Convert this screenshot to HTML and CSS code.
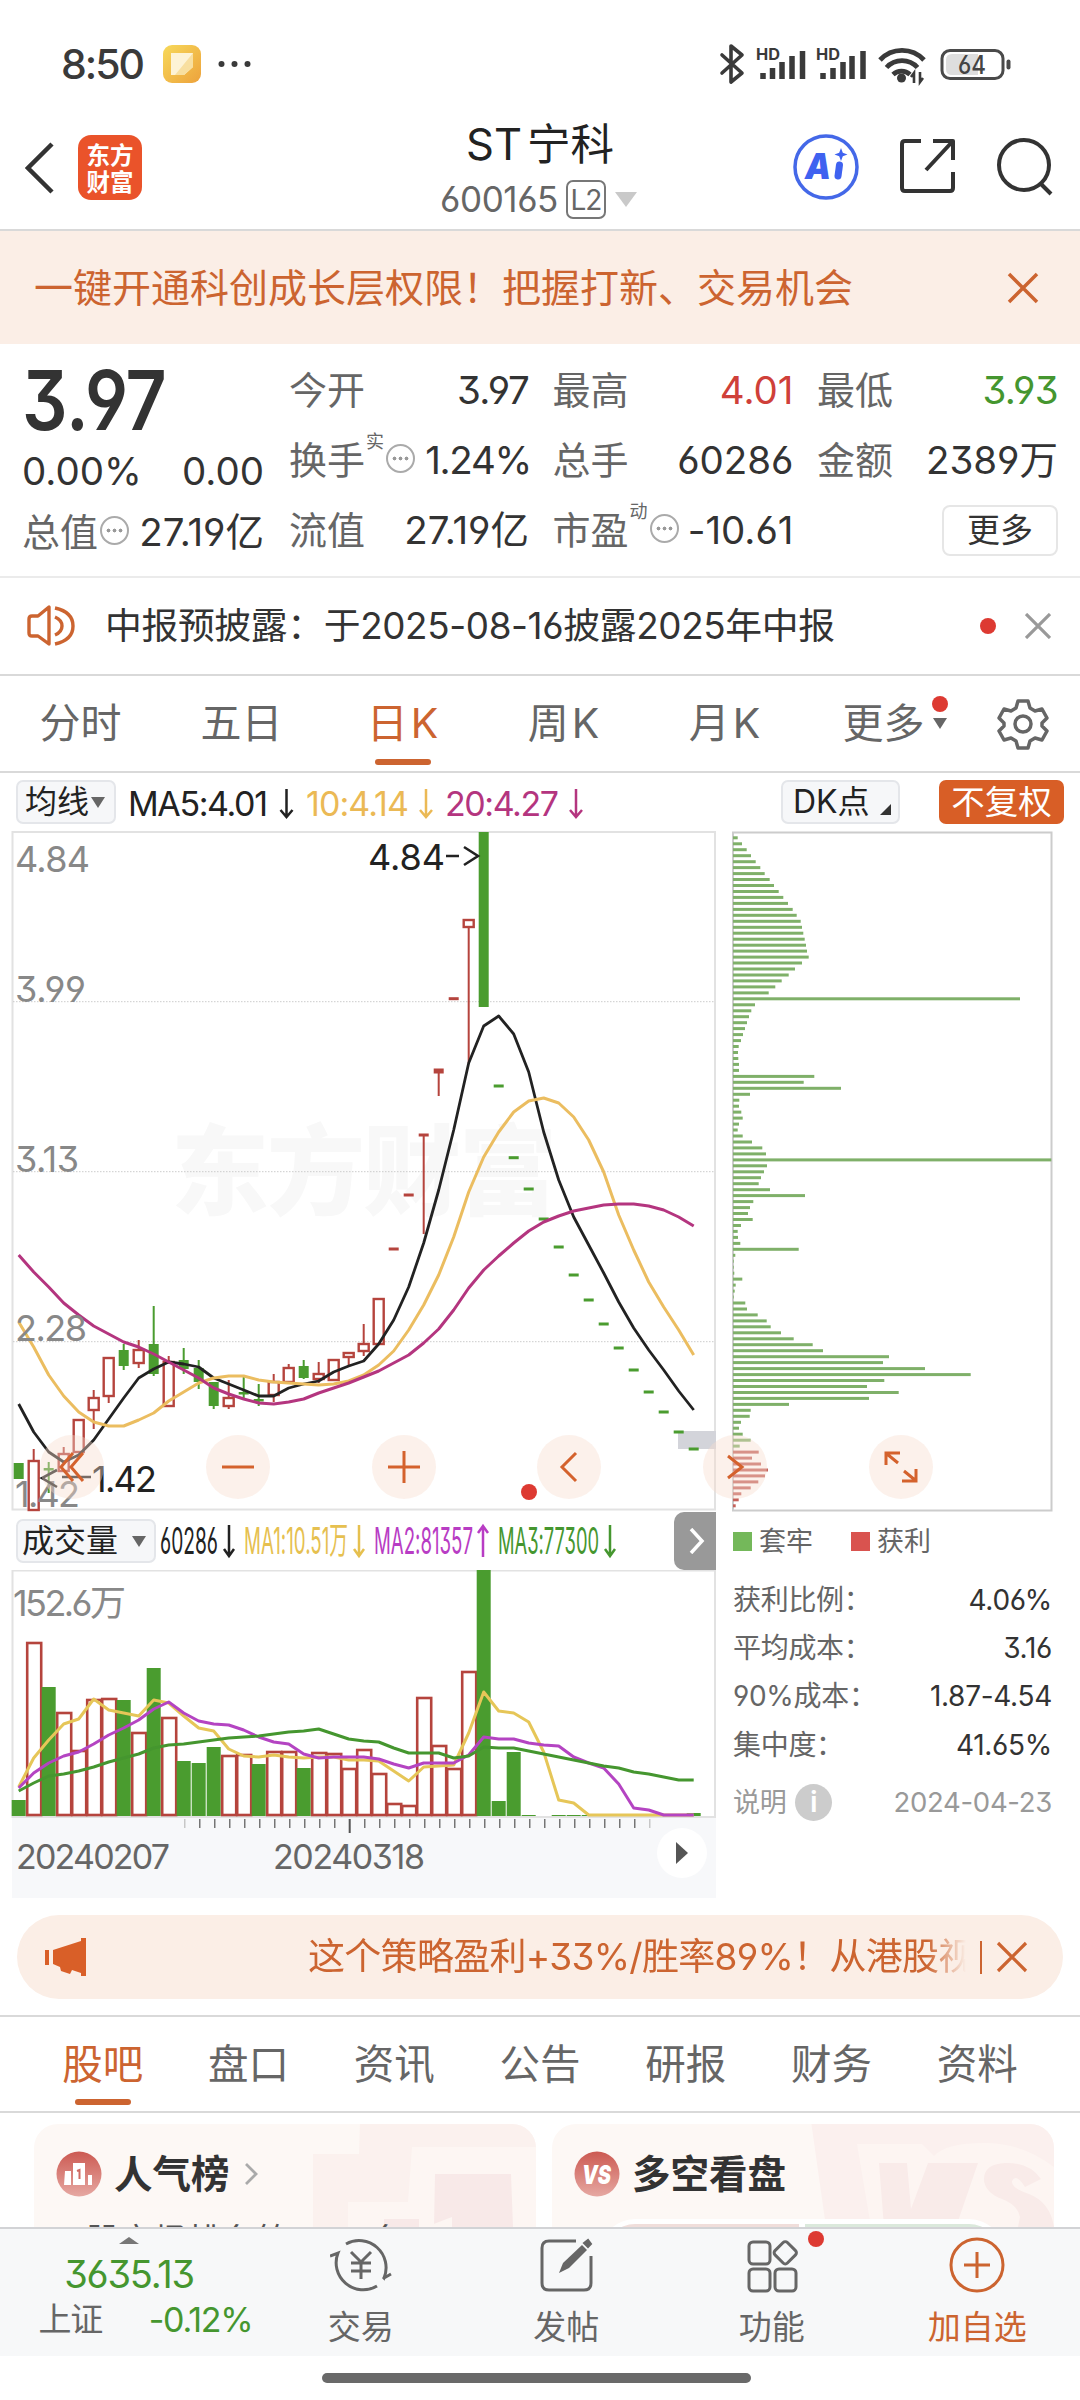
FILE: index.html
```
<!DOCTYPE html>
<html lang="zh-CN">
<head>
  <meta charset="UTF-8">
  <meta name="viewport" content="width=device-width, initial-scale=1.0">
  <title>ST宁科 600165</title>
  <link rel="stylesheet" href="styles.css">
</head>
<body>
  <!-- Status Bar -->
  <div class="status-bar">
    <span class="clock">8:50</span>
    <svg class="app-icon" width="38" height="38" viewBox="0 0 38 38">
      <defs>
        <linearGradient id="noteBg" x1="0" y1="0" x2="1" y2="1"><stop offset="0" stop-color="#f7d95a"/><stop offset="1" stop-color="#eda23c"/></linearGradient>
      </defs>
      <rect width="38" height="38" rx="9" fill="url(#noteBg)"/>
      <path d="M8 8h22v14l-9 8H8z" fill="#fdf3d6"/>
      <path d="M30 8v14l-9 8h-9z" fill="#f8dfa0"/>
    </svg>
    <svg class="dots" width="34" height="8" viewBox="0 0 34 8" fill="#3a3a3a"><circle cx="3.500" cy="4" r="3"/><circle cx="16.500" cy="4" r="3"/><circle cx="29.500" cy="4" r="3"/></svg>
    <svg class="status-icons" width="296" height="44" viewBox="716 41 296 44">
      <path d="M722 54l20 18-11 9V45l11 9-20 18" fill="none" stroke="#3a3a3a" stroke-width="3.600" stroke-linejoin="round" stroke-linecap="round"/>
      <text class="hd" x="756" y="59" textLength="24" lengthAdjust="spacingAndGlyphs">HD</text>
      <path d="M763 78v-6M772.500 78v-11M782 78v-17M792 78v-23M802.500 78v-28" stroke="#3a3a3a" stroke-width="5.500"/>
      <text class="hd" x="816" y="59" textLength="24" lengthAdjust="spacingAndGlyphs">HD</text>
      <path d="M823 78v-6M833 78v-11M843 78v-17M852 78v-23M863 78v-28" stroke="#3a3a3a" stroke-width="5.500"/>
      <g fill="none" stroke="#3a3a3a" stroke-width="4.800">
        <path d="M880 59a30 30 0 0 1 44 0"/>
        <path d="M886.500 66.500a21 21 0 0 1 31 0"/>
        <path d="M893 73.500a12.500 12.500 0 0 1 17 0"/>
      </g>
      <circle cx="901.500" cy="77" r="4.500" fill="#3a3a3a"/>
      <path d="M914 82V72l-3 4M920 71v10l3-4" fill="none" stroke="#3a3a3a" stroke-width="2.600"/>
      <rect x="942" y="49.500" width="61" height="28" rx="8" fill="#fff" stroke="#4a4a4a" stroke-width="3"/>
      <path d="M952 53h26v21h-26q-6 0-6-6v-9q0-6 6-6z" fill="#dedede"/>
      <rect x="1006.500" y="58.500" width="4" height="10" rx="2" fill="#4a4a4a"/>
      <text class="battery-text" x="958" y="73" textLength="28" lengthAdjust="spacingAndGlyphs">64</text>
    </svg>
  </div>

  <!-- Header -->
  <header class="header">
    <div class="header-left">
      <svg width="32" height="52" viewBox="0 0 32 52" fill="none" stroke="#333" stroke-width="4.500"><path d="M27 2L3 26l24 24"/></svg>
      <div class="logo"><span>东方</span><span>财富</span></div>
    </div>
    <div class="header-title">
      <div class="stock-name">ST<span>宁科</span></div>
      <div class="stock-code">600165<span class="level">L2</span><i class="caret"></i></div>
    </div>
    <div class="header-right">
      <svg width="66" height="66" viewBox="0 0 66 66">
        <circle cx="33" cy="33" r="31" fill="#fff" stroke="#4468e8" stroke-width="3.500"/>
        <text class="ai" x="12" y="45" textLength="26" lengthAdjust="spacingAndGlyphs">A</text>
        <path d="M46.500 31l-1.500 11" stroke="#3f62f0" stroke-width="7" stroke-linecap="round"/>
        <path d="M48 14l1.800 4.700 4.700 1.800-4.700 1.800L48 27l-1.800-4.700-4.700-1.800 4.700-1.800z" fill="#3f62f0"/>
      </svg>
      <svg width="56" height="56" viewBox="0 0 56 56" fill="none" stroke="#333" stroke-width="4" stroke-linejoin="round">
        <path d="M22 3H6q-3 0-3 3v44q0 3 3 3h45q3 0 3-3V34M34 3h20v19M53 4L27 32"/>
      </svg>
      <svg width="58" height="58" viewBox="0 0 58 58" fill="none" stroke="#333" stroke-width="4"><circle cx="28" cy="27" r="25"/><path d="M44 45l11 11"/></svg>
    </div>
  </header>

  <!-- Permission banner -->
  <div class="banner">
    <span>一键开通科创成长层权限！把握打新、交易机会</span>
    <svg width="32" height="32" viewBox="0 0 32 32" stroke="#cc6430" stroke-width="3.500"><path d="M2 2l28 28M30 2L2 30"/></svg>
  </div>

  <!-- Quote -->
  <section class="quote">
    <div class="quote-main">
      <div class="price"><span>3.97</span></div>
      <div class="quote-cell change"><b>0.00%</b><b>0.00</b></div>
      <div class="quote-cell"><label>总值</label><i class="more-dot"></i><b>27.19亿</b></div>
    </div>
    <div class="quote-grid">
      <div class="quote-cell"><label>今开</label><b class="short">3.97</b></div>
      <div class="quote-cell"><label>最高</label><b class="red">4.01</b></div>
      <div class="quote-cell"><label>最低</label><b class="short green">3.93</b></div>
      <div class="quote-cell"><label>换手</label><sup>实</sup><i class="more-dot"></i><b class="tight">1.24%</b></div>
      <div class="quote-cell"><label>总手</label><b>60286</b></div>
      <div class="quote-cell"><label>金额</label><b>2389万</b></div>
      <div class="quote-cell"><label>流值</label><b>27.19亿</b></div>
      <div class="quote-cell"><label>市盈</label><sup>动</sup><i class="more-dot"></i><b>-10.61</b></div>
      <div class="quote-cell"><button class="more-btn">更多</button></div>
    </div>
  </section>

  <!-- Notice -->
  <div class="notice">
    <svg width="50" height="42" viewBox="0 0 50 42" fill="none" stroke="#cc6430" stroke-width="3.400" stroke-linejoin="round">
      <path d="M22 2v37l-11-8H5q-3 0-3-3V14q0-3 3-3h6zM28 12q7 3 7 9t-7 9M28 3q18 4 18 18T28 39"/>
    </svg>
    <span class="notice-text">中报预披露：于2025-08-16披露2025年中报</span>
    <i class="red-dot"></i>
    <svg width="26" height="26" viewBox="0 0 26 26" stroke="#999" stroke-width="3.200"><path d="M1 1l24 24M25 1L1 25"/></svg>
  </div>

  <!-- Period tabs -->
  <nav class="period-tabs">
    <a>分时</a>
    <a>五日</a>
    <a class="active">日<span>K</span></a>
    <a>周<span>K</span></a>
    <a>月<span>K</span></a>
    <a class="has-more">更多<i class="red-dot"></i><i class="caret-dark"></i></a>
    <svg width="52" height="52" viewBox="0 0 52 52" fill="none" stroke="#666" stroke-width="3.500" stroke-linejoin="round">
      <path d="M21 3h10l2 7 5 3 7-2 5 9-5 5v3l5 5-5 9-7-2-5 3-2 7H21l-2-7-5-3-7 2-5-9 5-5v-3l-5-5 5-9 7 2 5-3z"/>
      <circle cx="26" cy="26" r="8"/>
    </svg>
  </nav>

  <!-- Moving averages -->
  <div class="ma-bar">
    <button class="chip ma-select">均线<i class="caret-dark"></i></button>
    <svg width="470" height="44" viewBox="132 779 470 44">
      <text x="130" y="815" textLength="140" fill="#222">MA5:4.01</text>
      <path d="M288.500 788v28m-6-7l6 7 6-7" stroke="#222"/>
      <text x="308" y="815" textLength="103" fill="#ebb955">10:4.14</text>
      <path d="M428 788v28m-6-7l6 7 6-7" stroke="#ebb955"/>
      <text x="447" y="815" textLength="114" fill="#b4357f">20:4.27</text>
      <path d="M578 788v28m-6-7l6 7 6-7" stroke="#b4357f"/>
    </svg>
    <button class="chip dk-select">DK点<i class="corner"></i></button>
    <button class="chip adjust">不复权</button>
  </div>

  <!-- Charts -->
  <section class="charts">
    <div class="chart-left">
      <svg id="klineChart" width="716" height="681" viewBox="0 831 716 681"></svg>
      <div class="vol-bar">
        <button class="chip vol-select">成交量<i class="caret-dark"></i></button>
        <svg width="470" height="58" viewBox="156 1512 470 58">
          <text x="160" y="1554" textLength="58" lengthAdjust="spacingAndGlyphs" fill="#222">60286</text>
          <path d="M229 1525v31m-5-7l5 7 5-7" stroke="#222"/>
          <text x="244" y="1554" textLength="104" lengthAdjust="spacingAndGlyphs" fill="#e6c04f">MA1:10.51万</text>
          <path d="M359 1525v31m-5-7l5 7 5-7" stroke="#e6c04f"/>
          <text x="374" y="1554" textLength="99" lengthAdjust="spacingAndGlyphs" fill="#b83cc4">MA2:81357</text>
          <path d="M483 1557v-31m-5 7l5-7 5 7" stroke="#b83cc4"/>
          <text x="498" y="1554" textLength="101" lengthAdjust="spacingAndGlyphs" fill="#45962f">MA3:77300</text>
          <path d="M610 1525v31m-5-7l5 7 5-7" stroke="#45962f"/>
        </svg>
        <button class="vol-next"><svg width="16" height="26" viewBox="0 0 16 26" fill="none" stroke="#fff" stroke-width="3.500"><path d="M2 1l11 12L2 25"/></svg></button>
      </div>
      <svg id="volumeChart" width="716" height="328" viewBox="0 1570 716 328"></svg>
    </div>
    <div class="chart-right">
      <svg id="chipChart" width="322" height="681" viewBox="731 831 322 681"></svg>
      <div class="legend"><i class="square green-bg"></i>套牢<i class="square red-bg"></i>获利</div>
      <div class="stats">
        <div class="stat"><span>获利比例：</span><b>4.06%</b></div>
        <div class="stat"><span>平均成本：</span><b>3.16</b></div>
        <div class="stat"><span>90%成本：</span><b>1.87-4.54</b></div>
        <div class="stat"><span>集中度：</span><b>41.65%</b></div>
        <div class="stat explain"><span>说明</span><i class="info">i</i><b>2024-04-23</b></div>
      </div>
    </div>

    <!-- Floating chart controls -->
    <div class="controls">
      <button><svg width="30" height="32" viewBox="0 0 30 32"><path d="M16 2L4 16l12 14M26 2L14 16l12 14"/></svg></button>
      <button><svg width="32" height="32" viewBox="0 0 32 32"><path d="M0 16h32"/></svg></button>
      <button><svg width="32" height="32" viewBox="0 0 32 32"><path d="M0 16h32M16 0v32"/></svg></button>
      <button><i class="red-dot"></i><svg width="20" height="32" viewBox="0 0 20 32"><path d="M17 2L3 16l14 14"/></svg></button>
      <button><svg width="20" height="32" viewBox="0 0 20 32"><path d="M3 5l14 11L3 27"/></svg></button>
      <button><svg width="34" height="32" viewBox="0 0 34 32"><path d="M2 14V2h14M3 3l11 9M32 18v12H18M31 29l-11-9"/></svg></button>
    </div>
  </section>

  <!-- Ad pill -->
  <div class="promo">
    <svg width="44" height="38" viewBox="0 0 44 38" fill="#d95f28"><path d="M0 12h4v15H0zM8 12l28-9v-3h5v38h-5v-3l-9-3-2 4-9-3-1-4-7-3z"/></svg>
    <span class="promo-text">这个策略盈利+33%/胜率89%！从港股视</span>
    <i class="divider"></i>
    <svg width="32" height="32" viewBox="0 0 32 32" stroke="#cc6430" stroke-width="3.200"><path d="M2 2l28 28M30 2L2 30"/></svg>
  </div>

  <!-- Content tabs -->
  <nav class="content-tabs">
    <a class="active">股吧</a>
    <a>盘口</a>
    <a>资讯</a>
    <a>公告</a>
    <a>研报</a>
    <a>财务</a>
    <a>资料</a>
  </nav>

  <!-- Cards, cut off by the bottom bar -->
  <section class="cards">
    <div class="card">
      <svg class="card-bg" width="502" height="106" viewBox="34 2121 502 106">
        <path d="M360 2121h176v106H313v-73h46z" fill="#fbf1ee"/>
        <path d="M412 2147h124l4 80H348v-25h60z" fill="#fdf6f3"/>
        <path d="M435 2174h76l2 53h-79zM384 2219h35v8h-35z" fill="#f8e9e8"/>
        <path d="M431 2225l21-8v10h-21z" fill="#fdf6f3"/>
      </svg>
      <div class="card-head">
        <svg width="46" height="46" viewBox="0 0 46 46">
          <defs><linearGradient id="redBadge" x1="0" y1="0" x2="0" y2="1"><stop offset="0" stop-color="#cc5a52"/><stop offset="1" stop-color="#e6a8a2"/></linearGradient></defs>
          <circle cx="23" cy="23" r="22.500" fill="url(#redBadge)"/>
          <path d="M9 20h6v14H8zM17 12h12v22H17zM32 24h4v10h-4z" fill="#fff"/>
          <path d="M21 20l2.500-1v9" stroke="#cf6a62" stroke-width="2" fill="none"/>
        </svg>
        <h3>人气榜</h3>
        <svg width="14" height="24" viewBox="0 0 14 24" fill="none" stroke="#aaa" stroke-width="2.800"><path d="M2 2l10 10L2 22"/></svg>
      </div>
      <p class="rank-text"><span>股市场排名第</span><span>名</span></p>
    </div>
    <div class="card">
      <svg class="card-bg" width="503" height="106" viewBox="551 2121 503 106">
        <path d="M810 2121h244v106H825z" fill="#fbf0ee"/>
        <path d="M856 2144h65l12 12q12-13 50-13 40 0 71 25v59H870z" fill="#fdf5f2"/>
        <path d="M878 2163h28l4 46 17-46h50l-22 64h-72zM1040 2179q-12-17-36-16-22 1-21 18 2 12 18 18t18 18l-2 10h36q-4-25-25-33-18-6-17-13 4-8 13 6z" fill="#f9ebe9"/>
      </svg>
      <div class="card-head">
        <svg width="46" height="46" viewBox="0 0 46 46"><circle cx="23" cy="23" r="22.500" fill="url(#redBadge)"/><text class="vs" x="8" y="33" textLength="29" lengthAdjust="spacingAndGlyphs">VS</text></svg>
        <h3>多空看盘</h3>
      </div>
      <div class="vote"><i class="vote-red"></i><i class="vote-green"></i></div>
    </div>
  </section>

  <!-- Bottom bar -->
  <footer class="bottom-bar">
    <div class="index-box">
      <i class="caret-up"></i>
      <div class="index-value">3635.13</div>
      <div class="index-row"><span>上证</span><b>-0.12%</b></div>
    </div>
    <a class="action">
      <svg width="62" height="58" viewBox="0 0 62 58" fill="none" stroke="#666" stroke-width="3">
        <path d="M16 8A27 27 0 0 1 54 42l-1-1M54 42l7-4M47 50A27 27 0 0 1 8 17l-8 3"/>
        <path d="M21 16l10 10 10-10M31 26v17M21 27h20M21 35h20"/>
      </svg>
      交易
    </a>
    <a class="action">
      <svg width="54" height="58" viewBox="0 0 54 58" fill="none" stroke="#666" stroke-width="3">
        <path d="M37 5H10Q3 5 3 12v35q0 7 7 7h35q7 0 7-7V20"/>
        <path d="M20 37l4-10L43 9l5 5-18 18z" fill="#666" stroke="none"/><path d="M45 7l4-3 3 4-3 3z" fill="#666" stroke-width="2"/>
      </svg>
      发帖
    </a>
    <a class="action">
      <svg width="54" height="58" viewBox="0 0 54 58" fill="none" stroke="#666" stroke-width="3">
        <rect x="4" y="6" width="21" height="22" rx="4"/><rect x="4" y="33" width="21" height="22" rx="4"/><rect x="30" y="33" width="21" height="22" rx="4"/>
        <rect x="31.500" y="8" width="17.500" height="17.500" rx="3" transform="rotate(45 40.200 16.800)"/>
      </svg>
      功能<i class="red-dot"></i>
    </a>
    <a class="action active">
      <svg width="58" height="58" viewBox="0 0 58 58" fill="none" stroke="#cc6430" stroke-width="3"><circle cx="29" cy="29" r="26"/><path d="M16 29h26M29 16v26"/></svg>
      加自选
    </a>
  </footer>
  <div class="home-area"><i></i></div>

  <script src="script.js"></script>
</body>
</html>
```
FILE: styles.css
```
* {
  margin: 0;
  padding: 0;
  box-sizing: border-box;
}

body {
  width: 1080px;
  height: 2400px;
  overflow: hidden;
  background-color: #fff;
  color: #333;
  font-family: Inter, "Noto Sans CJK SC", sans-serif;
  font-feature-settings: "cv03", "cv04", "cv09", "calt" 0;
  font-size: 38px;
  line-height: 1;
}

svg {
  display: block;
  flex-shrink: 0;
}

button {
  border: none;
  background: none;
  font: inherit;
  color: inherit;
  font-feature-settings: inherit;
}

i,
b {
  font-style: normal;
  font-weight: 400;
}

.red { color: #cf4039; }
.green { color: #45962f; }

.red-dot {
  width: 16px;
  height: 16px;
  border-radius: 50%;
  background-color: #dd3a32;
}

/* Status Bar */
.status-bar {
  height: 128px;
  display: flex;
  align-items: center;
  padding: 0 68px 0 61px;
}

.clock {
  width: 102px;
  font-size: 41px;
  font-weight: 500;
  letter-spacing: -2px;
  color: #3a3a3a;
}

.dots {
  margin-left: 17px;
}

.status-icons {
  margin-left: auto;
}

.hd {
  font-size: 16px;
  font-weight: 700;
  fill: #3a3a3a;
}

.battery-text {
  font-size: 25px;
  font-weight: 500;
  fill: #444;
}

/* Header */
.header {
  height: 103px;
  display: grid;
  grid-template-columns: 400px 1fr 400px;
  border-bottom: 2px solid #d9d9d9;
}

.header-left {
  display: flex;
  align-items: flex-start;
  gap: 21px;
  padding: 7px 0 0 25px;
}

.header-left svg {
  margin-top: 7px;
}

.logo {
  width: 64px;
  height: 65px;
  border-radius: 13px;
  background-color: #ea532a;
  color: #fff;
  font-family: "Noto Sans CJK SC", sans-serif;
  font-size: 23.500px;
  font-weight: 700;
  line-height: 27px;
  display: flex;
  flex-direction: column;
  align-items: center;
  justify-content: center;
}

.header-title {
  text-align: center;
  color: #222;
}

.stock-name {
  height: 48px;
  line-height: 33px;
  font-size: 43.500px;
}

.stock-name span {
  margin-left: 5px;
}

.stock-code {
  display: flex;
  align-items: center;
  height: 46px;
  margin-left: 40px;
  font-size: 35px;
  letter-spacing: -0.400px;
  color: #666;
}

.level {
  width: 40px;
  height: 39px;
  margin-left: 8px;
  border: 2px solid #777;
  border-radius: 7px;
  line-height: 36px;
  font-size: 28px;
  letter-spacing: -1px;
}

.caret {
  margin-left: 9px;
  border: 11px solid transparent;
  border-top: 15px solid #c9c9c9;
  border-bottom: none;
}

.header-right {
  display: flex;
  align-items: flex-start;
  padding: 6px 26px 0 0;
  justify-content: flex-end;
}

.ai {
  font-size: 36px;
  font-weight: 900;
  font-style: italic;
  fill: #3f62f0;
}

.header-right svg:nth-child(2) {
  margin: 4px 41px 0 40px;
}

.header-right svg:nth-child(3) {
  margin-top: 4px;
}

/* Permission banner */
.banner {
  height: 113px;
  padding: 0 41px 0 34px;
  display: flex;
  align-items: center;
  justify-content: space-between;
  background-color: #fbeee6;
  color: #cc6430;
  font-size: 39px;
}

/* Quote */
.quote {
  height: 234px;
  padding: 11px 22px 0 22px;
  display: flex;
  gap: 25px;
  border-bottom: 2px solid #ebebeb;
}

.quote-main {
  width: 242px;
}

.quote-grid {
  flex: 1;
  display: grid;
  grid-template-columns: 240px 241px 241px;
  grid-auto-rows: 70px;
  justify-content: space-between;
}

.price {
  height: 90px;
  font-size: 83px;
  font-weight: 600;
  line-height: 90px;
}

.price span {
  display: inline-block;
  transform: scaleX(0.86);
  transform-origin: left;
}

.quote-cell {
  height: 70px;
  display: flex;
  align-items: center;
}

.quote-cell.change {
  height: 52px;
}

.quote-cell label {
  color: #666;
}

.quote-cell b {
  margin-left: auto;
  font-size: 38.500px;
}

.quote-cell b.tight {
  margin-right: -2px;
  letter-spacing: -1.300px;
}

.quote-cell b.short {
  letter-spacing: -0.700px;
}

.quote-cell.change b:first-child {
  margin-left: 0;
}

.quote-cell sup {
  width: 20px;
  margin: -36px -2px 0 1px;
  font-size: 18px;
  color: #666;
}

/* round "..." hint after a label */
.more-dot {
  width: 29px;
  height: 29px;
  margin: -4px 0 0 2px;
  flex-shrink: 0;
  border: 2px solid #aaa;
  border-radius: 50%;
  background:
    radial-gradient(circle at 6.500px 12.500px, #999 1.700px, transparent 2.200px),
    radial-gradient(circle at 12.500px 12.500px, #999 1.700px, transparent 2.200px),
    radial-gradient(circle at 18.500px 12.500px, #999 1.700px, transparent 2.200px);
}

.more-btn {
  width: 116px;
  height: 51px;
  margin-left: auto;
  border: 2px solid #e6e6e6;
  border-radius: 8px;
  font-size: 33px;
}

/* Notice */
.notice {
  height: 98px;
  padding: 0 29px 0 27px;
  display: flex;
  align-items: center;
  border-bottom: 2px solid #d9d9d9;
}

.notice-text {
  margin-left: 28px;
  font-size: 36.800px;
  letter-spacing: -0.350px;
}

.notice .red-dot {
  margin: 0 29px 0 auto;
}

/* Period tabs */
.period-tabs {
  height: 97px;
  display: flex;
  align-items: center;
  border-bottom: 2px solid #d9d9d9;
  color: #666;
  font-size: 41px;
}

.period-tabs a {
  position: relative;
  width: 161px;
  height: 95px;
  line-height: 95px;
  text-align: center;
}

.period-tabs a span {
  margin-left: 3px;
}

.period-tabs a.has-more {
  padding-right: 4px;
}

.period-tabs a.active,
.content-tabs a.active {
  color: #cc6430;
}

.period-tabs a.active::after,
.content-tabs a.active::after {
  content: "";
  position: absolute;
  bottom: 6px;
  left: 50%;
  width: 56px;
  height: 6px;
  margin-left: -28px;
  border-radius: 3px;
  background-color: #cc6430;
}

.has-more .red-dot {
  position: absolute;
  top: 20px;
  right: 18px;
}

.has-more .caret-dark {
  position: absolute;
  top: 42px;
  right: 19px;
}

.period-tabs svg {
  margin-left: 31px;
}

.caret-dark {
  border: 7px solid transparent;
  border-top: 11px solid #666;
  border-bottom: none;
}

/* Moving averages */
.ma-bar {
  height: 58px;
  padding: 0 16px 0 16px;
  display: flex;
  align-items: center;
}

.ma-bar svg {
  overflow: visible;
}

.ma-bar text {
  font-size: 34px;
}

.ma-bar path,
.vol-bar path {
  fill: none;
  stroke-width: 2.500;
}

.chip {
  height: 44px;
  display: flex;
  align-items: center;
  border: 2px solid #e4e6ea;
  border-radius: 7px;
  background-color: #f6f7f9;
  color: #222;
  font-size: 32px;
  line-height: 40px;
}

.ma-select {
  width: 100px;
  padding-left: 7px;
  margin-right: 14px;
}

.ma-select .caret-dark {
  margin-left: 2px;
}

.dk-select {
  width: 119px;
  margin-left: auto;
  margin-right: 39px;
  padding-left: 10px;
}

.corner {
  margin: 14px 0 0 10px;
  border-left: 11px solid transparent;
  border-bottom: 11px solid #333;
}

.adjust {
  width: 125px;
  justify-content: center;
  border: none;
  background-color: #d85e26;
  color: #fff;
  font-size: 33.500px;
}

/* Charts */
.charts {
  position: relative;
  height: 1067px;
  display: flex;
  align-items: flex-start;
}

.chart-left {
  width: 716px;
}

.chart-right {
  width: 322px;
  margin-left: 15px;
}

.axis-label {
  font-size: 36px;
  fill: #888;
}

.date-label {
  font-size: 34px;
  fill: #666;
}

.mark-label {
  font-size: 36px;
  fill: #222;
}

.watermark {
  font-family: "Noto Sans CJK SC", sans-serif;
  font-size: 98px;
  font-weight: 900;
  fill: #f8f8f8;
}

.vol-bar {
  height: 58px;
  display: flex;
  align-items: center;
}

.vol-bar text {
  font-size: 37px;
}

.vol-select {
  width: 140px;
  margin-left: 16px;
  padding-left: 4px;
}

.vol-select .caret-dark {
  margin-left: 14px;
}

.vol-next {
  width: 42px;
  height: 58px;
  margin-left: auto;
  padding-left: 15px;
  border-radius: 10px 0 0 10px;
  background-color: #999;
}

.vol-next path {
  stroke-width: 3.500;
}

.legend {
  height: 58px;
  padding-left: 2px;
  display: flex;
  align-items: center;
  gap: 7px;
  font-size: 27px;
  color: #666;
}

.square {
  width: 19px;
  height: 19px;
}

.green-bg { background-color: #74b85a; }

.red-bg {
  margin-left: 31px;
  background-color: #d9534f;
}

.stats {
  padding-top: 3px;
}

.stat {
  height: 48.300px;
  padding: 5px 1px 0 2px;
  display: flex;
  align-items: center;
  font-size: 28px;
  color: #333;
}

.stat span {
  color: #666;
  letter-spacing: -0.300px;
}

.stat b {
  margin-left: auto;
  letter-spacing: -0.300px;
}

.stat.explain {
  height: 68px;
}

.stat.explain span,
.stat.explain b {
  color: #999;
}

.stat.explain span {
  font-size: 27px;
}

.stat.explain b {
  font-size: 27.500px;
}

.info {
  width: 37px;
  height: 37px;
  margin-left: 9px;
  border-radius: 50%;
  background-color: #ccc;
  color: #fff;
  font-size: 29px;
  font-weight: 600;
  line-height: 36px;
  text-align: center;
}

.controls {
  position: absolute;
  top: 604px;
  left: 40px;
  display: flex;
  gap: 101.800px;
}

.controls button {
  position: relative;
  width: 64px;
  height: 64px;
  display: flex;
  align-items: center;
  justify-content: center;
  border-radius: 50%;
  background-color: rgba(247, 221, 206, 0.4);
}

.controls path {
  fill: none;
  stroke: #d4622d;
  stroke-width: 3;
}

.controls .red-dot {
  position: absolute;
  left: -16px;
  top: 49px;
}

/* Ad pill */
.promo {
  height: 84px;
  margin: 17px 17px 16px;
  padding: 0 35px 0 28px;
  display: flex;
  align-items: center;
  border-radius: 42px;
  background-color: #fbeee6;
  color: #cc6430;
}

.promo-text {
  width: 658px;
  margin-left: 219px;
  font-size: 37px;
  letter-spacing: -0.700px;
  line-height: 50px;
  white-space: nowrap;
  overflow: hidden;
  -webkit-mask-image: linear-gradient(to right, #000 94%, transparent 100%);
  mask-image: linear-gradient(to right, #000 94%, transparent 100%);
}

.divider {
  width: 2px;
  height: 33px;
  margin: 0 14px 0 auto;
  background-color: #cc6430;
}

/* Content tabs */
.content-tabs {
  height: 98px;
  padding: 0 30px;
  display: flex;
  border-top: 2px solid #d9d9d9;
  border-bottom: 2px solid #d9d9d9;
  color: #666;
  font-size: 40.500px;
  line-height: 95px;
}

.content-tabs a {
  position: relative;
  flex: 1;
  text-align: center;
}

/* Cards */
.cards {
  height: 114px;
  padding: 11px 25px 0 34px;
  display: flex;
  gap: 16px;
  overflow: hidden;
}

.card {
  position: relative;
  width: 502px;
  height: 220px;
  padding: 27px 0 0 22px;
  border-radius: 24px;
  overflow: hidden;
  background-color: #fdf8f5;
}

.card-bg {
  position: absolute;
  top: -3px;
  left: 0;
}

.card-head {
  position: relative;
  height: 46px;
  display: flex;
  align-items: center;
}

.card-head h3 {
  margin: 0 14px 0 12px;
  font-size: 38.500px;
  font-weight: 600;
}

.vs {
  font-size: 26px;
  font-weight: 900;
  font-style: italic;
  fill: #fff;
}

.rank-text {
  position: relative;
  margin: 27px 0 0 30px;
  display: flex;
  gap: 81px;
  font-size: 34px;
  color: #555;
}

.vote {
  position: relative;
  width: 404px;
  margin: 22px 0 0 26px;
  padding: 5px;
  display: flex;
  gap: 6px;
  border-radius: 40px;
  background-color: #fff;
}

.vote i {
  flex: 1;
  height: 60px;
}

.vote-red {
  border-radius: 30px 0 0 30px;
  background-color: #f0dedb;
}

.vote-green {
  border-radius: 0 30px 30px 0;
  background-color: #dbe9dc;
}

/* Bottom bar */
.bottom-bar {
  position: relative;
  height: 129px;
  display: flex;
  border-top: 2px solid #d2d3d6;
  background-color: #f7f8f9;
}

.index-box {
  width: 258px;
  padding-top: 8px;
  display: flex;
  flex-direction: column;
  align-items: center;
  color: #45962f;
}

.caret-up {
  border: 10px solid transparent;
  border-bottom: 7px solid #777;
  border-top: none;
}

.index-value {
  margin-top: 11px;
  font-size: 38px;
  letter-spacing: -1.200px;
}

.index-row {
  width: 214px;
  margin: 10px 0 0 33px;
  display: flex;
  justify-content: space-between;
  font-size: 34px;
  letter-spacing: -1.200px;
}

.index-row span {
  color: #666;
  font-size: 33px;
}

.action {
  position: relative;
  width: 205.500px;
  padding-top: 7px;
  display: flex;
  flex-direction: column;
  align-items: center;
  gap: 17px;
  font-size: 33px;
  color: #666;
}

.action .red-dot {
  position: absolute;
  top: 2px;
  left: 139px;
}

.action.active {
  color: #cc6430;
}

.home-area {
  display: flex;
  justify-content: center;
  padding: 17px 8px 0 0;
}

.home-area i {
  width: 429px;
  height: 10px;
  border-radius: 5px;
  background-color: #696969;
}
```
FILE: script.js
```
const GREEN = '#4a9c2f';
const RED = '#b5443d';
const STEP = 15;
const FIRST_X = 18.7;

const centerX = i => FIRST_X + i * STEP;

// type, body top, body bottom, wick top, wick bottom
const candles = [
  ['g', 1463, 1479], ['r', 1460, 1511, 1449, 1460], ['g', 1468, 1470.5, 1462, 1493], ['r', 1453, 1472, 1447, 1472],
  ['r', 1419, 1453], ['r', 1397, 1411, 1390, 1429], ['r', 1357, 1397, 1357, 1403], ['g', 1350, 1366, 1344, 1370],
  ['r', 1349, 1364, 1340, 1368], ['g', 1344, 1374, 1306, 1376], ['r', 1361, 1407, 1356, 1361], ['g', 1360, 1369, 1348, 1374],
  ['g', 1368, 1382, 1360, 1389], ['g', 1382, 1406, 1382, 1409], ['r', 1397, 1407, 1380, 1409], ['g', 1392, 1394.5, 1377, 1398],
  ['g', 1399, 1401.5, 1384, 1406], ['r', 1381, 1396, 1374, 1402], ['r', 1367, 1383, 1364, 1383], ['g', 1366, 1378, 1360, 1379],
  ['r', 1373, 1380, 1362, 1383], ['r', 1359, 1381], ['r', 1352, 1358, 1352, 1365], ['r', 1343, 1352, 1324, 1356],
  ['r', 1298, 1345], ['-r', 1249], ['-r', 1195], ['-r', 1135, 0, 1135, 1234], ['-r', 1071, 0, 1071, 1096], ['-r', 998.7],
  ['r', 919, 928, 928, 1063], ['g', 832, 1007], ['-g', 1086], ['-g', 1157.7], ['-g', 1189], ['-g', 1219], ['-g', 1247],
  ['-g', 1275], ['-g', 1300], ['-g', 1324], ['-g', 1348], ['-g', 1370], ['-g', 1392], ['-g', 1412], ['-g', 1432], ['-g', 1449]
];

const ma5 = [1404, 1432, 1452, 1462, 1455, 1440, 1419, 1398, 1378, 1369, 1362, 1364, 1367, 1378, 1384, 1390, 1396, 1396, 1388, 1384, 1381, 1372, 1366, 1361, 1344, 1320, 1287, 1243, 1190, 1130, 1063, 1026, 1016, 1034, 1072, 1132, 1180, 1217, 1245, 1273, 1302, 1328, 1350, 1370, 1391, 1410];
const ma10 = [1322, 1347, 1375, 1396, 1412, 1422, 1426, 1426, 1420, 1413, 1401, 1392, 1383, 1378, 1376, 1376, 1380, 1382, 1383, 1384, 1385, 1384, 1381, 1375, 1365, 1351, 1330, 1305, 1275, 1237, 1192, 1157, 1132, 1112, 1101, 1098, 1103, 1117, 1140, 1172, 1215, 1250, 1282, 1307, 1330, 1355];
const ma20 = [1255, 1272, 1287, 1303, 1315, 1326, 1334, 1342, 1347, 1354, 1362, 1370, 1378, 1388, 1394, 1399, 1403, 1404, 1402, 1399, 1393, 1388, 1383, 1377, 1371, 1363, 1355, 1343, 1329, 1310, 1288, 1270, 1256, 1243, 1231, 1222, 1216, 1211, 1208, 1205, 1204, 1204, 1206, 1210, 1217, 1226];

// bar top of each day
const volumes = [
  ['g', 1800], ['r', 1643], ['g', 1687], ['r', 1713], ['r', 1751], ['r', 1700], ['r', 1699], ['g', 1700], ['r', 1733], ['g', 1668],
  ['r', 1718], ['g', 1761], ['g', 1763], ['g', 1747], ['r', 1756], ['r', 1755], ['g', 1764], ['r', 1752], ['r', 1752], ['g', 1768],
  ['r', 1753], ['r', 1754], ['r', 1769], ['r', 1750], ['r', 1774], ['r', 1804], ['r', 1806], ['r', 1698], ['r', 1746], ['r', 1769],
  ['r', 1672], ['g', 1570], ['g', 1801], ['g', 1752], ['g', 1815], ['g', 1816], ['g', 1815], ['g', 1815], ['g', 1815], ['g', 1816],
  ['g', 1816], ['g', 1816], ['g', 1816], ['g', 1816], ['g', 1816], ['g', 1813]
];

const volMa1 = [1787, 1758, 1740, 1724, 1719, 1699, 1710, 1713, 1716, 1700, 1703, 1716, 1728, 1731, 1749, 1756, 1757, 1755, 1757, 1758, 1757, 1757, 1760, 1760, 1761, 1771, 1781, 1767, 1766, 1765, 1733, 1692, 1711, 1713, 1722, 1752, 1800, 1803, 1815, 1815, 1815, 1815, 1815, 1815, 1815, 1815];
const volMa2 = [1788, 1773, 1763, 1756, 1752, 1744, 1735, 1728, 1720, 1709, 1702, 1713, 1721, 1724, 1725, 1730, 1737, 1742, 1744, 1754, 1758, 1757, 1757, 1757, 1759, 1764, 1768, 1763, 1763, 1763, 1755, 1737, 1739, 1739, 1743, 1745, 1746, 1757, 1763, 1768, 1784, 1808, 1810, 1815, 1815, 1815];
const volMa3 = [1791, 1783, 1776, 1774, 1771, 1767, 1762, 1758, 1754, 1748, 1745, 1744, 1742, 1740, 1738, 1737, 1736, 1734, 1732, 1731, 1729, 1734, 1739, 1741, 1742, 1748, 1753, 1753, 1753, 1758, 1756, 1747, 1748, 1748, 1751, 1754, 1757, 1760, 1763, 1766, 1768, 1772, 1774, 1777, 1780, 1780];

// width of each cost level, in thirds of a pixel
const costs = [14, 27, 41, 54, 68, 82, 95, 110, 123, 137, 151, 165, 179, 191, 203, 207, 211, 215, 219, 222, 227, 207, 186, 167, 146, 127, 107, 861, 66, 55, 48, 42, 36, 30, 24, 17, 15, 16, 18, 18, 244, 212, 324, 51, 19, 18, 25, 29, 18, 14, 29, 57, 88, 99, 955, 102, 93, 84, 77, 111, 216, 61, 51, 45, 59, 24, 14, 15, 22, 197, 7, 2, 2, 4, 28, 8, 5, 2, 37, 42, 74, 101, 113, 144, 182, 239, 270, 468, 450, 576, 713, 454, 402, 497, 408, 168, 53, 50, 24, 18, 29, 53, 20, 77, 57, 84, 105, 96, 76, 53, 25, 17, 8];
const PROFIT_FROM = 103;

function rect(x, y, w, h, fill, stroke, strokeWidth = 2) {
  return `<rect x="${x}" y="${y}" width="${w}" height="${h}" fill="${fill}"${stroke ? ` stroke="${stroke}" stroke-width="${strokeWidth}"` : ''}/>`;
}

function polyline(values, color, width) {
  const points = values.map((y, i) => `${centerX(i).toFixed(1)},${y}`).join(' ');
  return `<polyline points="${points}" fill="none" stroke="${color}" stroke-width="${width}" stroke-linejoin="round"/>`;
}

function drawCandle([type, top, bottom, wickTop, wickBottom], i) {
  const x = centerX(i);
  const color = type.endsWith('g') ? GREEN : RED;
  let out = '';
  if (wickTop) {
    out += rect(x - 1, wickTop, 2, wickBottom - wickTop, color);
  }
  if (type[0] === '-') {
    const h = i === 28 ? 5 : 3;
    out += rect(x - 5, top - h / 2, 10, h, color);
  } else if (type === 'g') {
    out += rect(x - 5, top, 10, bottom - top, color);
  } else {
    out += rect(x - 5, top + 1, 10, bottom - top - 2, '#fff', color, 2.4);
  }
  return out;
}

function drawKline() {
  let out = '<text class="watermark" x="171" y="1207" textLength="386">东方财富</text>';
  out += rect(12.5, 832, 702.5, 677.5, 'none', '#e2e2e2');
  [1001.7, 1171.7, 1341.7].forEach(y => {
    out += `<path d="M13 ${y}H715" stroke="#ccc" stroke-width="1" stroke-dasharray="1.500 1.500"/>`;
  });
  out += rect(678, 1431, 38, 18, '#d3d4da');
  out += candles.map(drawCandle).join('');
  out += polyline(ma5, '#222', 2.8);
  out += polyline(ma10, '#ebbd60', 3);
  out += polyline(ma20, '#b4357f', 3);
  [['4.84', 872, 75], ['3.99', 1002, 71], ['3.13', 1172, 64], ['2.28', 1341, 72], ['1.42', 1507, 65]].forEach(([t, y, w]) => {
    out += `<text class="axis-label" x="15" y="${y}" textLength="${w}">${t}</text>`;
  });
  out += '<text class="mark-label" x="368" y="870" textLength="77">4.84</text>';
  out += '<text class="mark-label" x="92" y="1492" textLength="65">1.42</text>';
  out += '<path d="M446 856h13M464 847l14 9-14 9M62 1477h29M57 1470l-15 8 15 9" fill="none" stroke="#222" stroke-width="2.600"/>';
  document.getElementById('klineChart').innerHTML = out;
}

function drawVolume() {
  let out = rect(12, 1817, 704, 81, '#f7f8fa');
  out += rect(12.5, 1570.5, 702.5, 246.5, 'none', '#e2e2e2');
  volumes.forEach(([type, top], i) => {
    const x = centerX(i);
    if (type === 'g') {
      out += rect(x - 7, top, 14, 1816 - top, GREEN);
    } else {
      out += rect(x - 6.5, top, 14, 1815 - top, '#fff', RED, 2.6);
    }
  });
  out += polyline(volMa1, '#e6c658', 3);
  out += polyline(volMa2, '#b444c2', 3);
  out += polyline(volMa3, '#45962f', 3);
  for (let i = 11; i <= 42; i++) {
    const faint = i === 11 || i === 42;
    const major = i === 22;
    out += rect(centerX(i) + (major ? 0 : 0.5), 1819, major ? 2 : 1.2, major ? 14 : 9, faint ? '#bbb' : '#555');
  }
  out += '<text class="axis-label" x="13" y="1616" textLength="113">152.6万</text>';
  out += '<text class="date-label" x="16" y="1869" textLength="154">20240207</text>';
  out += '<text class="date-label" x="273" y="1869" textLength="152">20240318</text>';
  out += '<circle cx="682" cy="1853" r="25" fill="#fff"/><path d="M676 1842v22l12-11z" fill="#555"/>';
  document.getElementById('volumeChart').innerHTML = out;
}

function drawCosts() {
  let out = rect(733, 832.5, 318.5, 678, 'none', '#ccc');
  costs.forEach((w, i) => {
    out += rect(733, (836.3 + i * 5.964).toFixed(1), (w / 3).toFixed(1), 3, i < PROFIT_FROM ? '#7fb069' : '#c4615a');
  });
  document.getElementById('chipChart').innerHTML = out;
}

drawKline();
drawVolume();
drawCosts();
```
